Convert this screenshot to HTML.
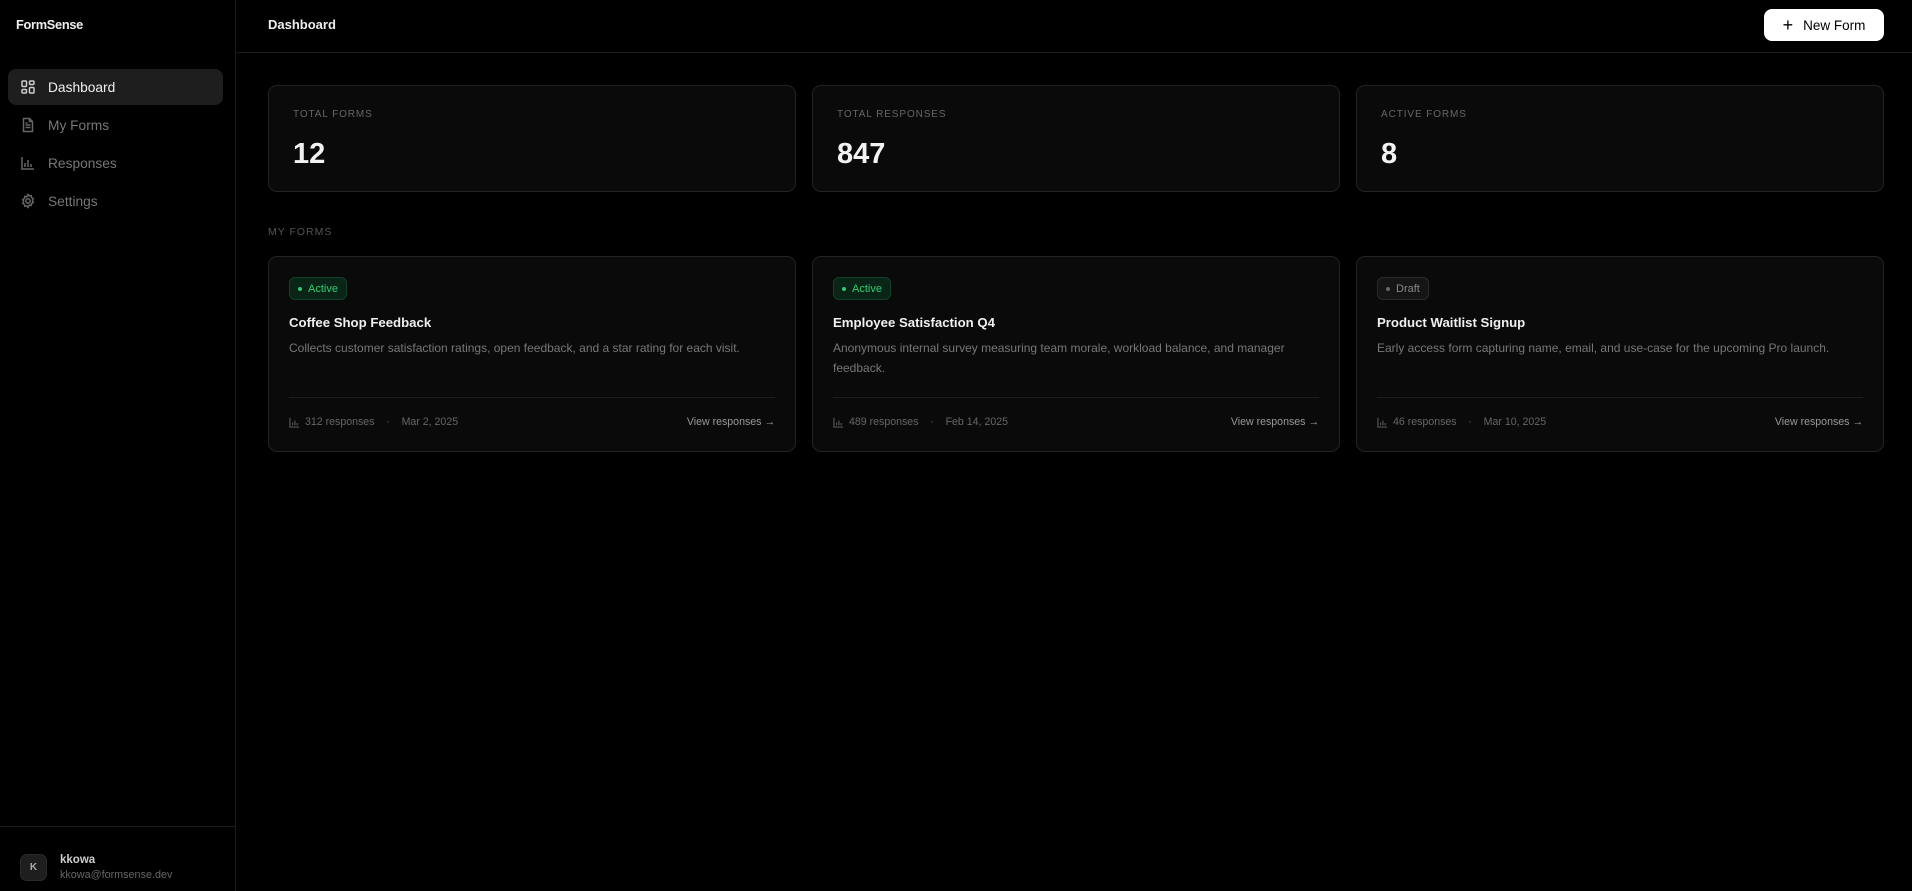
<!DOCTYPE html>
<html><head><meta charset="utf-8"><style>
*{box-sizing:border-box;margin:0;padding:0}
body{width:1912px;height:891px;background:#000;font-family:"Liberation Sans",sans-serif;color:#eee;position:relative;overflow:hidden}
.side{position:absolute;left:0;top:0;width:236px;height:891px;border-right:1px solid #1c1c1c}
.logo{position:absolute;left:16px;top:17px;font-size:12.8px;font-weight:bold;letter-spacing:-0.3px}
.hline{position:absolute;left:0;right:0;top:52px;border-top:1px solid #1c1c1c}
.nav{position:absolute;left:8px;width:215px;height:36px;border-radius:8px;display:flex;align-items:center;padding-left:12px;font-size:13.75px;color:#777}
.nav svg{width:16px;height:16px;margin-right:12px;stroke:#666;fill:none;stroke-width:1.5}
.nav.act{background:#1e1e1e;color:#f0f0f0}
.nav.act svg{stroke:#ccc}
.user{position:absolute;left:0;top:826px;width:235px;border-top:1px solid #1c1c1c}
.av{position:absolute;left:20px;top:854px;width:27px;height:27px;border-radius:7px;background:#1e1e1e;border:1px solid #2a2a2a;color:#aaa;font-size:10px;display:flex;align-items:center;justify-content:center;font-weight:bold}
.un{position:absolute;left:60px;top:854px;font-size:11.5px;font-weight:bold;color:#ccc}
.ue{position:absolute;left:60px;top:869px;font-size:10.8px;color:#666}
.title{position:absolute;left:268px;top:17px;font-size:13px;font-weight:bold}
.btn{position:absolute;left:1764px;top:9px;width:120px;height:32px;background:#fff;border-radius:8px;color:#000;font-size:13.5px;display:flex;align-items:center;justify-content:center;gap:10px}
.btn b{font-weight:normal;font-size:18px;line-height:1}
.card{position:absolute;background:#0a0a0a;border:1px solid #222;border-radius:9px}
.lab{position:absolute;left:24px;top:23px;font-size:10px;letter-spacing:0.9px;color:#666}
.num{position:absolute;left:24px;top:52px;font-size:29px;font-weight:bold;color:#f2f2f2}
.sec{position:absolute;left:268px;top:226px;font-size:10.5px;letter-spacing:1px;color:#555}
.badge{position:absolute;left:20px;top:20px;height:23px;padding:0 8px;border-radius:6px;font-size:11px;display:flex;align-items:center;gap:6px}
.badge i{width:4px;height:4px;border-radius:50%;display:block}
.ba{background:#0b2418;border:1px solid #12402a;color:#2ecc71}.ba i{background:#2ecc71}
.bd{background:#151515;border:1px solid #2a2a2a;color:#888}.bd i{background:#666}
.ft{position:absolute;left:20px;top:58px;font-size:13.2px;font-weight:bold;color:#f0f0f0}
.fd{position:absolute;left:20px;top:81px;right:24px;font-size:12px;line-height:20px;color:#777}
.dv{position:absolute;left:20px;right:20px;top:140px;border-top:1px solid #1e1e1e}
.meta{position:absolute;left:20px;top:159px;font-size:10.6px;color:#666;display:flex;align-items:center}
.meta svg{width:11px;height:11px;stroke:#555;fill:none;stroke-width:1.3;margin-right:5px}
.vr{position:absolute;right:20px;top:159px;font-size:10.6px;color:#999}
</style></head><body>
<div class="side">
<div class="logo">FormSense</div>
<div class="nav act" style="top:69px"><svg viewBox="0 0 16 16"><rect x="2" y="2" width="4.5" height="5.5" rx="1"/><rect x="9.5" y="2" width="4.5" height="3.5" rx="1"/><rect x="2" y="10.5" width="4.5" height="3.5" rx="1"/><rect x="9.5" y="8.5" width="4.5" height="5.5" rx="1"/></svg>Dashboard</div>
<div class="nav" style="top:107px"><svg viewBox="0 0 16 16"><path d="M3.5 1.5h6l3 3v10h-9z M9.5 1.5v3h3 M5.5 8h5 M5.5 10.5h5 M5.5 6h2"/></svg>My Forms</div>
<div class="nav" style="top:145px"><svg viewBox="0 0 16 16"><path d="M2 2v12h12 M5 12V8 M8 12V5 M11 12V9"/></svg>Responses</div>
<div class="nav" style="top:183px"><svg viewBox="0 0 16 16"><circle cx="8" cy="8" r="2.2"/><path d="M8 1.5l1.2 1.6 2-.4.4 2 1.7 1.1-.9 1.8.9 1.8-1.7 1.1-.4 2-2-.4L8 14.5l-1.2-1.6-2 .4-.4-2-1.7-1.1.9-1.8-.9-1.8 1.7-1.1.4-2 2 .4z"/></svg>Settings</div>
<div class="user"></div>
</div>
<div class="av">K</div><div class="un">kkowa</div><div class="ue">kkowa@formsense.dev</div>
<div class="hline" style="left:236px"></div>
<div class="title">Dashboard</div>
<div class="btn"><b>+</b>New Form</div>

<div class="card" style="left:268px;top:85px;width:528px;height:107px"><div class="lab">TOTAL FORMS</div><div class="num">12</div></div>
<div class="card" style="left:812px;top:85px;width:528px;height:107px"><div class="lab">TOTAL RESPONSES</div><div class="num">847</div></div>
<div class="card" style="left:1356px;top:85px;width:528px;height:107px"><div class="lab">ACTIVE FORMS</div><div class="num">8</div></div>

<div class="sec">MY FORMS</div>

<div class="card" style="left:268px;top:256px;width:528px;height:196px">
<div class="badge ba"><i></i>Active</div><div class="ft">Coffee Shop Feedback</div>
<div class="fd">Collects customer satisfaction ratings, open feedback, and a star rating for each visit.</div>
<div class="dv"></div>
<div class="meta"><svg viewBox="0 0 12 12"><path d="M1 1v10h10 M4 9V6 M6.5 9V4 M9 9V6.5"/></svg>312 responses &nbsp;&nbsp;&nbsp;·&nbsp;&nbsp;&nbsp; Mar 2, 2025</div>
<div class="vr">View responses →</div></div>

<div class="card" style="left:812px;top:256px;width:528px;height:196px">
<div class="badge ba"><i></i>Active</div><div class="ft">Employee Satisfaction Q4</div>
<div class="fd">Anonymous internal survey measuring team morale, workload balance, and manager feedback.</div>
<div class="dv"></div>
<div class="meta"><svg viewBox="0 0 12 12"><path d="M1 1v10h10 M4 9V6 M6.5 9V4 M9 9V6.5"/></svg>489 responses &nbsp;&nbsp;&nbsp;·&nbsp;&nbsp;&nbsp; Feb 14, 2025</div>
<div class="vr">View responses →</div></div>

<div class="card" style="left:1356px;top:256px;width:528px;height:196px">
<div class="badge bd"><i></i>Draft</div><div class="ft">Product Waitlist Signup</div>
<div class="fd">Early access form capturing name, email, and use-case for the upcoming Pro launch.</div>
<div class="dv"></div>
<div class="meta"><svg viewBox="0 0 12 12"><path d="M1 1v10h10 M4 9V6 M6.5 9V4 M9 9V6.5"/></svg>46 responses &nbsp;&nbsp;&nbsp;·&nbsp;&nbsp;&nbsp; Mar 10, 2025</div>
<div class="vr">View responses →</div></div>
</body></html>
